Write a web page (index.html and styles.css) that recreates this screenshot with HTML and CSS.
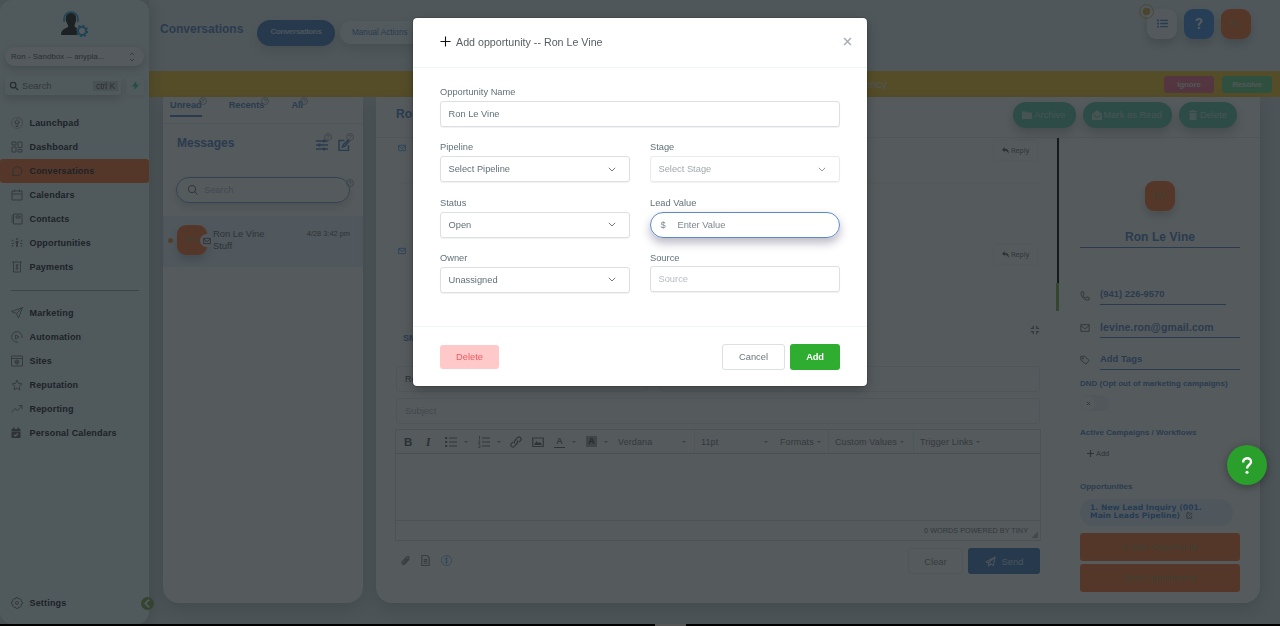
FILE: index.html
```
<!DOCTYPE html>
<html lang="en">
<head>
  <meta charset="UTF-8" />
  <title>Conversations</title>
  <link rel="stylesheet" href="styles.css">
</head>
<body>
  <div class="app">
    <aside class="sidebar">
      <svg class="logo" viewBox="0 0 28 27">
        <path d="M1 25c0-5 3-6 7-8 1-1-1-3-2-6-1-5 1-8 5-8s6 3 5 8c-1 3-2 5-1 6l2 1v7z" fill="#1d1d1d"/>
        <path d="M4 11V9a7 7 0 0 1 14 0v2M4 9v3M18 9v3" fill="none" stroke="#2a9fe0" stroke-width="1.6"/>
        <circle cx="22" cy="21" r="4" fill="#fff" stroke="#2a9fe0" stroke-width="2"/>
        <circle cx="22" cy="21" r="5.4" fill="none" stroke="#2a9fe0" stroke-width="1.6" stroke-dasharray="2.1 2.1"/>
      </svg>
      <div class="account">Ron - Sandbox -- anypla...
        <svg class="updown" viewBox="0 0 8 12"><path d="M2 4l2-2 2 2M2 8l2 2 2-2"/></svg>
      </div>
      <div class="side-search">
        <div class="search-box">
          <svg class="icon dark" viewBox="0 0 24 24"><circle cx="10" cy="10" r="6.5"/><path d="M15 15l7 7"/></svg>
          <span>Search</span><kbd>ctrl K</kbd>
        </div>
        <div class="bolt"><svg viewBox="0 0 10 10"><path d="M6 0L1 6h3.2L3.6 10 9 4H5.6z"/></svg></div>
      </div>
      <nav class="nav">
        <a><svg class="icon" viewBox="0 0 24 24"><circle class="ring" cx="12" cy="12" r="11"/><path class="arc" d="M13 1a11 11 0 0 1 9 6"/><path d="M12 5l5 6h-2.500v3h-5v-3H7zM10 17v2h4v-2"/></svg>Launchpad</a>
        <a><svg class="icon" viewBox="0 0 24 24"><path d="M2 2h8v6H2zM14 2h8v11h-8zM2 12h8v10H2zM14 17h8v5h-8z"/></svg>Dashboard</a>
        <a class="active"><svg class="icon" viewBox="0 0 24 24"><path d="M3 21l1.500-5A9 9 0 1 1 9 20.500z"/></svg>Conversations</a>
        <a><svg class="icon" viewBox="0 0 24 24"><path d="M2 4h20v18H2zM2 10h20M7 1v5M17 1v5"/></svg>Calendars</a>
        <a><svg class="icon" viewBox="0 0 24 24"><path d="M5 2h17v20H5zM10 6h8v4h-8zM1 6h5M1 10h5M1 14h5M1 18h5"/></svg>Contacts</a>
        <a><svg class="icon" viewBox="0 0 24 24"><path d="M12 8v12M9 10h6" stroke-width="3.500"/><circle cx="12" cy="4" r="1.500"/><circle cx="3" cy="7" r="1"/><circle cx="21" cy="7" r="1"/><circle cx="3" cy="18" r="1"/><circle cx="21" cy="18" r="1"/><path d="M1 13h5M18 13h5"/></svg>Opportunities</a>
        <a><svg class="icon" viewBox="0 0 24 24"><path d="M2 2h20M5 2v20h14V2M15 8c-5-2-6 3-3 4s3 5-3 3.500M12 6v12"/></svg>Payments</a>
      </nav>
      <hr>
      <nav class="nav">
        <a><svg class="icon" viewBox="0 0 24 24"><path d="M1 9L23 1l-8 21-4-9zM11 13L23 1"/></svg>Marketing</a>
        <a><svg class="icon" viewBox="0 0 24 24"><path d="M22 14A10.500 10.500 0 1 0 14 22M9 8l7 4-7 4z"/></svg>Automation</a>
        <a><svg class="icon" viewBox="0 0 24 24"><path d="M1 2h22v20H1zM1 7h22"/><circle cx="12" cy="14" r="4"/><path d="M8 14h8M12 10v8"/></svg>Sites</a>
        <a><svg class="icon" viewBox="0 0 24 24"><path d="M12 2l3 7 7 .6-5.500 5L18 22l-6-4-6 4 1.500-7.400L2 9.600 9 9z"/></svg>Reputation</a>
        <a><svg class="icon" viewBox="0 0 24 24"><path d="M1 19l7-8 5 4 9-10M15 5h7v7"/></svg>Reporting</a>
        <a><svg class="icon filled" viewBox="0 0 24 24"><path d="M1 4h18v4H1zM1 9h18v13H1zM4 1h3v4H4zM13 1h3v4h-3z"/><path class="check" d="M6 15l3 3 5-5"/></svg>Personal Calendars</a>
      </nav>
      <nav class="nav settings">
        <a><svg class="icon" viewBox="0 0 24 24"><circle cx="12" cy="12" r="3"/><path d="M10 1h4l1 3 3-1 3 3-1 3 3 1v4l-3 1 1 3-3 3-3-1-1 3h-4l-1-3-3 1-3-3 1-3-3-1v-4l3-1-1-3 3-3 3 1z"/></svg>Settings</a>
      </nav>
      <div class="collapse"><svg viewBox="0 0 12 12"><path d="M7.500 2.500L4 6l3.500 3.500"/></svg></div>
    </aside>

    <main class="main">
      <header class="topbar">
        <h1>Conversations</h1>
        <div class="top-tab on">Conversations</div>
        <div class="top-tab">Manual Actions</div>
        <div class="top-right">
          <div class="tile list"><i class="badge"></i>
            <svg viewBox="0 0 12 10"><path d="M0 1.500h2M0 5h2M0 8.500h2" stroke-width="2"/><path d="M3.500 1.500H12M3.500 5H12M3.500 8.500H12"/></svg>
          </div>
          <div class="tile help">?</div>
          <div class="tile me">RL</div>
        </div>
      </header>
      <div class="notice"><span class="notice-text">agency</span><b class="ignore">Ignore</b><b class="resolve">Resolve</b></div>

      <div class="content">
        <section class="inbox">
          <div class="tabs"><span class="on">Unread<i class="q">?</i></span><span>Recents<i class="q">?</i></span><span>All<i class="q">?</i></span></div>
          <div class="inbox-head">
            <h2>Messages</h2>
            <span class="tool"><svg viewBox="0 0 12 12"><path d="M0 2h12M0 6h12M0 10h12"/><path d="M8 .5v3M3.500 4.500v3M8 8.500v3" stroke-width="2"/></svg><i class="q">?</i></span>
            <span class="tool"><svg viewBox="0 0 12 12"><path d="M6.500 1.500H1v10h9.500V6M4.500 8l1-2.500L10.500.8l1 1L7 7z"/></svg><i class="q">?</i></span>
          </div>
          <div class="inbox-search"><svg class="icon dark" viewBox="0 0 24 24"><circle cx="11" cy="11" r="8"/><path d="M17 17l6 6"/></svg>Search<i class="q">?</i></div>
          <div class="thread">
            <i class="dot"></i>
            <div class="avatar">RV<span class="mail-chip"><svg class="icon mail dark" viewBox="0 0 24 24"><path d="M2 4h20v16H2zM2 6l10 8L22 6"/></svg></span></div>
            <div class="thread-text">Ron Le Vine<br>Stuff</div>
            <time>4/28 3:42 pm</time>
          </div>
        </section>

        <section class="conversation">
          <div class="conv-head">
            <h2>Ron</h2>
            <div class="action"><svg viewBox="0 0 10 10"><path d="M0 1.500h4l1 1h5v6.500H0z"/></svg>Archive</div>
            <div class="action"><svg viewBox="0 0 10 10"><path d="M0 4l5-4 5 4v6H0z"/><path class="cut" d="M1.500 5l3.500 2.500L8.500 5"/></svg>Mark as Read</div>
            <div class="action"><svg viewBox="0 0 10 10"><path d="M1 1h2.500V0h3v1H9v1.200H1zM1.600 3h6.800v7H1.600z"/></svg>Delete</div>
          </div>
          <div class="conv-body">
            <div class="mail-col">
              <div class="mail-row"><svg class="icon mail blue" viewBox="0 0 24 24"><path d="M2 4h20v16H2zM2 6l10 8L22 6"/></svg>
                <span class="reply"><svg viewBox="0 0 8 8"><path d="M0 3l3-3v2c4 0 5 2 4.500 6C6.500 5 5 4.200 3 4.200V6z"/></svg>Reply</span></div>
              <div class="mail-row second"><svg class="icon mail blue" viewBox="0 0 24 24"><path d="M2 4h20v16H2zM2 6l10 8L22 6"/></svg>
                <span class="reply"><svg viewBox="0 0 8 8"><path d="M0 3l3-3v2c4 0 5 2 4.500 6C6.500 5 5 4.200 3 4.200V6z"/></svg>Reply</span></div>
              <div class="compose-tabs"><b>SMS</b>
                <svg class="shrink" viewBox="0 0 12 12"><path d="M1 4h3V1M8 1v3h3M11 8H8v3M4 11V8H1"/></svg></div>
              <div class="pair"><div class="field">Ron</div><div class="field"></div></div>
              <div class="field subject">Subject</div>
              <div class="editor">
                <div class="toolbar">
                  <b class="t-bold">B</b><b class="t-italic">I</b>
                  <svg class="t-list" viewBox="0 0 12 12"><path d="M4 2h8M4 6h8M4 10h8"/><path d="M0 2h2.200M0 6h2.200M0 10h2.200" stroke-width="2.200"/></svg><i class="caret"></i>
                  <svg class="t-num" viewBox="0 0 12 12"><path d="M4 2h8M4 6h8M4 10h8"/><path d="M1.500 0v3.500M.5 5h1.500L.5 7.500H2M.5 9H2v2.500H.5" stroke-width=".8"/></svg><i class="caret"></i>
                  <svg class="t-link" viewBox="0 0 12 12"><path d="M5 7.500a2.200 2.200 0 0 1 0-3l2.500-2.800a2 2 0 0 1 3 3L9 6.200M7 4.500a2.200 2.200 0 0 1 0 3l-2.500 2.800a2 2 0 0 1-3-3L3 5.800"/></svg>
                  <svg class="t-img" viewBox="0 0 12 12"><path d="M.7 2h10.600v8.500H.7z" /><path class="solid" d="M2 9l2.500-4L6 7l2-1 2 3z"/></svg>
                  <span class="t-color">A</span><i class="caret"></i>
                  <span class="t-back">A</span><i class="caret"></i>
                  <span class="t-font">Verdana<i class="caret"></i></span>
                  <span class="t-size">11pt<i class="caret"></i></span>
                  <span class="t-format">Formats<i class="caret"></i></span>
                  <span class="t-custom">Custom Values<i class="caret"></i></span>
                  <span class="t-trigger">Trigger Links<i class="caret"></i></span>
                </div>
                <div class="editor-area"></div>
                <div class="editor-foot">0 WORDS POWERED BY TINY<i class="grip"></i></div>
              </div>
              <div class="send-row">
                <svg class="icon" viewBox="0 0 24 24"><path d="M20 9l-9 10c-4 4-9-1-6-5L15 4c3-3 7 1 4 4l-9 10c-2 1-3-1-2-2l8-9" stroke-width="2.500"/></svg>
                <svg class="icon" viewBox="0 0 24 24"><path d="M4 1h11l5 5v17H4zM8 10h8M8 14h8M8 18h8" stroke-width="2.500"/></svg>
                <svg class="icon money" viewBox="0 0 24 24"><circle cx="12" cy="12" r="11"/><path d="M16 8c-6-3-9 2-4 4s2 6-4 3.500M12 4v16"/></svg>
                <div class="clear">Clear</div>
                <div class="send"><svg class="icon" viewBox="0 0 24 24"><path d="M2 13L22 2l-4 19-6-4-4 5v-7zM8 15L22 2" stroke-width="2.500"/></svg>Send</div>
              </div>
            </div>

            <div class="scroll"><i></i></div>

            <div class="contact">
              <div class="avatar">RV</div>
              <h2>Ron Le Vine</h2>
              <div class="info phone"><svg class="icon dark" viewBox="0 0 24 24"><path d="M3 2h5l2 6-3 2c1 4 3 6 7 7l2-3 6 2v5c-9 4-22-8-19-19z"/></svg><b>(941) 226-9570</b></div>
              <div class="info email"><svg class="icon dark" viewBox="0 0 24 24"><path d="M2 4h20v16H2zM2 6l10 8L22 6"/></svg><b>levine.ron@gmail.com</b></div>
              <div class="info tags"><svg class="icon dark" viewBox="0 0 24 24"><path d="M2 3h9l11 10-8 9L2 12z"/><circle cx="7" cy="8" r="1.500"/></svg><b>Add Tags</b></div>
              <h3>DND (Opt out of marketing campaigns)</h3>
              <div class="switch"><i><svg viewBox="0 0 6 6"><path d="M1 1l4 4M5 1L1 5"/></svg></i></div>
              <h3>Active Campaigns / Workflows</h3>
              <div class="add-flow"><svg viewBox="0 0 8 8"><path d="M4 0v8M0 4h8"/></svg>Add</div>
              <h3>Opportunities</h3>
              <div class="opp">1. New Lead Inquiry (001. Main Leads Pipeline) <svg viewBox="0 0 8 8"><path d="M5 1H1v6h5.500V4M3 5l4-4"/></svg></div>
              <div class="wide-btn">Create Opportunity</div>
              <div class="wide-btn">Book Appointment</div>
            </div>
          </div>
        </section>
      </div>
    </main>
  </div>
  <div class="taskbar"><i></i></div>

  <div class="backdrop"></div>

  <div class="modal">
    <div class="modal-head">
      <svg class="plus" viewBox="0 0 12 12"><path d="M6 .5v11M.5 6h11"/></svg>
      <span>Add opportunity -- Ron Le Vine</span>
      <svg class="close" viewBox="0 0 10 10"><path d="M1.200 1.200l7.600 7.600M8.800 1.200L1.200 8.800"/></svg>
    </div>
    <div class="modal-body">
      <div class="group full"><label>Opportunity Name</label><div class="input">Ron Le Vine</div></div>
      <div class="group"><label>Pipeline</label><div class="input">Select Pipeline<svg class="chev" viewBox="0 0 8 5"><path d="M.8.8L4 4 7.200.8"/></svg></div></div>
      <div class="group"><label>Stage</label><div class="input disabled">Select Stage<svg class="chev" viewBox="0 0 8 5"><path d="M.8.8L4 4 7.200.8"/></svg></div></div>
      <div class="group"><label>Status</label><div class="input">Open<svg class="chev" viewBox="0 0 8 5"><path d="M.8.8L4 4 7.200.8"/></svg></div></div>
      <div class="group"><label>Lead Value</label><div class="input money-input"><span>$</span>Enter Value</div></div>
      <div class="group"><label>Owner</label><div class="input">Unassigned<svg class="chev" viewBox="0 0 8 5"><path d="M.8.8L4 4 7.200.8"/></svg></div></div>
      <div class="group source"><label>Source</label><div class="input empty">Source</div></div>
    </div>
    <div class="modal-foot">
      <button class="btn-delete">Delete</button>
      <button class="btn-cancel">Cancel</button>
      <button class="btn-add">Add</button>
    </div>
  </div>

  <div class="fab"><svg viewBox="0 0 14 20"><path d="M2.500 6.500C2 0 12 0 11.700 6c0 3-4.700 3.500-4.700 7.500"/><circle cx="7" cy="17.800" r="1.800"/></svg></div>
</body>
</html>
```
FILE: styles.css
```
:root {
  --side: #ecfafb;
  --page: #dce6ea;
  --panel: #ffffff;
  --blue: #5485c6;
  --blue-btn: #477dbf;
  --orange: #ff7433;
  --line: #e8edf0;
  --ink: #202028;
}

* {
  box-sizing: border-box;
}

body {
  margin: 0;
  height: 626px;
  overflow: hidden;
  font-family: "Liberation Sans", Arial, sans-serif;
  font-size: 9px;
  color: #555;
  background: #000;
}

h1, h2, h3 {
  margin: 0;
  color: var(--blue);
}

h1, h2 {
  font-size: 12px;
}

svg {
  fill: none;
  stroke: currentColor;
  flex: none;
}

i {
  font-style: normal;
}

.app {
  display: flex;
  height: 624px;
  background: var(--page);
}

.icon {
  width: 12px;
  height: 12px;
  stroke-width: 1.800;
  stroke-linejoin: round;
  color: #777;
}
.icon.dark { color: #4a4a4a; }
.icon.mail { width: 8px; height: 8px; stroke-width: 2.500; }
.icon.blue { color: #4a9af0; }

/* sidebar */
.sidebar {
  position: relative;
  width: 149px;
  display: flex;
  flex-direction: column;
  padding: 10px 0 9px;
  background: var(--side);
  border-radius: 12px;
  box-shadow: 4px 0 14px rgba(0,0,0,0.16);
}

.logo {
  width: 28px;
  height: 27px;
  align-self: center;
  margin-right: 1px;
  stroke: none;
}

.account {
  display: flex;
  align-items: center;
  justify-content: space-between;
  height: 19px;
  margin: 10px 5px;
  padding: 0 8px 0 6px;
  font-size: 8px;
  border-radius: 10px;
  background: #fbffff;
  box-shadow: 0 3px 8px rgba(0,0,0,0.22);
}
.updown { width: 8px; height: 12px; color: #888; }

.side-search {
  display: flex;
  gap: 5px;
  margin: 0 5px 16px;
}
.search-box {
  flex: 1;
  display: flex;
  align-items: center;
  height: 19px;
  padding: 0 3px 0 4px;
  gap: 3px;
  border-radius: 3px;
  box-shadow: 0 4px 8px rgba(0,0,0,0.2);
}
.search-box .icon { width: 10px; height: 10px; stroke-width: 3; }
.search-box span { color: #777; font-size: 9.300px; }
.search-box kbd {
  margin-left: auto;
  padding: 0 3px;
  font: 8.300px "Liberation Sans", sans-serif;
  background: #d2dbe0;
}
.bolt {
  width: 18px;
  display: grid;
  place-items: center;
  border-radius: 3px;
  box-shadow: 0 1px 4px rgba(0,0,0,0.1);
}
.bolt svg { width: 9px; height: 9px; fill: #3ccf91; stroke: none; }

.nav a {
  display: flex;
  align-items: center;
  gap: 6.500px;
  height: 24px;
  padding-left: 11px;
  font-weight: bold;
  letter-spacing: 0.180px;
  color: var(--ink);
  border-radius: 3px;
}
.nav a.active { background: var(--orange); }
.nav a.active .icon { color: #555; }
.nav .ring { stroke: #bbb; }
.nav .arc { stroke: #ff9a5c; }
.nav .filled path { fill: #666; stroke: none; }
.nav .filled .check { fill: none; stroke: #fff; stroke-width: 2.500; }
.nav.settings { margin-top: auto; }

.sidebar hr {
  width: 128px;
  margin: 11px 0 10px 11px;
  border: 0;
  border-top: 1px solid #9aa8b0;
}

.collapse {
  position: absolute;
  right: -5px;
  bottom: 14px;
  z-index: 2;
  width: 13px;
  height: 13px;
  border-radius: 50%;
  background: #7ba64b;
  color: #fff;
}
.collapse svg { display: block; stroke-width: 1.600; }

/* top */
.main {
  flex: 1;
  min-width: 0;
  display: flex;
  flex-direction: column;
}
.topbar {
  display: flex;
  align-items: flex-start;
  height: 71px;
  padding: 0 29px 0 11px;
  background: #e6f2f4;
}
.topbar h1 { width: 97px; margin-top: 22px; }
.top-tab {
  height: 23px;
  margin-top: 21px;
  padding: 0 12px;
  line-height: 23px;
  font-size: 8.200px;
  color: var(--blue);
  border-radius: 13px;
  background: #f5fdff;
  box-shadow: 0 5px 12px rgba(0,0,0,0.15);
}
.top-tab.on {
  width: 78px;
  height: 26px;
  margin: 20px 5px 0 0;
  padding: 0;
  text-align: center;
  line-height: 24px;
  font-size: 8px;
  letter-spacing: -0.350px;
  font-weight: bold;
  color: #d8e8f8;
  background: var(--blue-btn);
}
.top-right { display: flex; gap: 7px; margin: 9px 0 0 auto; }
.tile {
  position: relative;
  width: 30px;
  height: 30px;
  display: grid;
  place-items: center;
  border-radius: 9px;
  box-shadow: 0 5px 10px rgba(0,0,0,0.2);
}
.tile.list { background: #f6fafc; color: var(--blue); }
.tile.list svg { width: 11px; height: 9px; margin-bottom: 2px; stroke-width: 1.400; }
.tile.help { background: #4492e8; color: #fff; font: bold 15px Roboto, sans-serif; }
.tile.me { background: var(--orange); color: #a0a060; }
.badge {
  position: absolute;
  left: -8px;
  top: -5px;
  width: 15px;
  height: 15px;
  border: 1px solid #d8b45a;
  border-radius: 50%;
  background: radial-gradient(#e0a844 0 3.500px, transparent 4px);
}

.notice {
  display: flex;
  align-items: center;
  height: 26px;
  padding-right: 8px;
  gap: 8px;
  background: #ffcb2d;
  color: #fff;
}
.notice-text { width: 738px; text-align: right; font-size: 10.500px; color: #e5e5e5; }
.notice b {
  width: 50px;
  line-height: 17px;
  text-align: center;
  font-size: 8px;
  letter-spacing: -0.150px;
  color: #eee;
  border-radius: 3px;
}
.ignore { margin-left: auto; background: #f66f88; }
.resolve { background: #6bd887; }

/* columns */
.content {
  flex: 1;
  display: flex;
  gap: 13px;
  padding: 0 20px 21px 14px;
}
.inbox, .conversation {
  background: var(--panel);
  border-radius: 0 0 16px 16px;
  box-shadow: 0 6px 18px rgba(0,0,0,0.18);
}
.inbox { width: 200px; }
.conversation { flex: 1; }

.q {
  display: grid;
  place-items: center;
  width: 8px;
  height: 8px;
  font: 6px "Liberation Sans", sans-serif;
  color: #8a949c;
  border: 1px solid #a5afb6;
  border-radius: 50%;
}

.tabs {
  display: flex;
  gap: 27px;
  height: 27px;
  padding: 0 7px;
  font-size: 9.200px;
  font-weight: bold;
  color: var(--blue);
  border-bottom: 1px solid var(--line);
}
.tabs span { position: relative; height: 20px; line-height: 16px; }
.tabs .on { border-bottom: 2px solid var(--blue); }
.tabs .q { position: absolute; top: 0; right: -5px; }

.inbox-head {
  display: flex;
  align-items: center;
  height: 39px;
  padding: 0 13px 0 14px;
  gap: 10px;
}
.inbox-head h2 { margin-right: auto; margin-bottom: 1px; }
.tool { position: relative; height: 12px; color: var(--blue); margin-top: 3px; }
.tool svg { width: 12px; height: 12px; stroke-width: 1.500; }
.tool .q { position: absolute; top: -6px; right: -4px; }

.inbox-search {
  position: relative;
  display: flex;
  align-items: center;
  gap: 6px;
  width: 174px;
  height: 26px;
  margin: 14px 0 13px 13px;
  padding: 0 0 1px 10px;
  font-size: 9.300px;
  color: #b4bcc4;
  border: 1px solid #7ba3d2;
  border-radius: 13px;
  box-shadow: 0 4px 8px rgba(0,0,0,0.16);
}
.inbox-search .icon { width: 11px; height: 11px; }
.inbox-search .q { position: absolute; top: 1px; right: -5px; }

.thread {
  display: flex;
  height: 51px;
  padding: 9px 13px 0 5px;
  background: #e9f4ff;
  color: #666;
}
.dot { width: 5px; height: 5px; margin: 13px 4px 0 0; border-radius: 50%; background: #f59330; }
.avatar {
  position: relative;
  display: grid;
  place-items: center;
  width: 30px;
  height: 30px;
  border-radius: 9px;
  background: var(--orange);
  color: #a09450;
  box-shadow: 0 5px 9px rgba(0,0,0,0.2);
}
.mail-chip {
  position: absolute;
  right: -6px;
  top: 9px;
  width: 13px;
  height: 13px;
  display: grid;
  place-items: center;
  border-radius: 50%;
  background: #eef4fa;
}
.thread-text { margin: 3px 0 0 6px; font-size: 9.400px; line-height: 12px; }
.thread time { margin: 4px 0 0 auto; font-size: 7.400px; }

/* conversation */
.conv-head {
  display: flex;
  height: 41px;
  padding: 5px 23px 0 20px;
  gap: 7px;
  border-bottom: 1px solid var(--line);
}
.conv-head h2 { margin: 5px auto 0 0; }
.action {
  display: flex;
  align-items: center;
  gap: 2px;
  height: 26px;
  padding: 0 10px 1px 9px;
  font-size: 9.400px;
  color: #c5e5dc;
  background: #5fc4a6;
  border-radius: 13px;
  box-shadow: 0 5px 12px rgba(0,0,0,0.25);
}
.action svg { width: 10px; height: 10px; fill: #c5e5dc; stroke: none; }
.action .cut { fill: none; stroke: #68b8a0; }

.conv-body { display: flex; }
.mail-col { width: 664px; padding-left: 20px; }
.mail-row {
  display: flex;
  justify-content: space-between;
  width: 644px;
  height: 46px;
  padding: 3px 3px 0 2px;
  border-bottom: 1px solid #f5f7f8;
}
.mail-row .icon { margin-top: 3px; }
.mail-row.second { margin-top: 57px; border: 0; }
.reply {
  display: flex;
  align-items: center;
  gap: 2px;
  width: 43px;
  height: 19px;
  padding-left: 8px;
  font: 7.500px Roboto, sans-serif;
  color: #777;
  border-radius: 3px;
  box-shadow: 0 0 4px rgba(0,0,0,0.08);
}
.reply svg { width: 7px; height: 7px; fill: #666; stroke: none; }
.second .reply { margin-top: 1px; }

.compose-tabs {
  display: flex;
  justify-content: space-between;
  height: 79px;
  width: 644px;
  padding: 46px 0 0 7px;
  color: var(--blue);
}
.shrink { width: 10px; height: 10px; margin-top: -8px; stroke-width: 1.500; color: #778; }
.field {
  width: 644px;
  height: 26px;
  padding-left: 8px;
  line-height: 24px;
  border: 1px solid var(--line);
  border-radius: 3px;
}
.pair { display: flex; gap: 13px; width: 644px; }
.pair .field:first-child { flex: none; width: 251px; }
.subject { margin: 6px 0 5px; font-size: 9.400px; color: #b5bcc2; }

.editor {
  width: 646px;
  height: 112px;
  margin-left: -1px;
  display: flex;
  flex-direction: column;
  border: 1px solid #dadfe2;
}
.toolbar {
  display: flex;
  align-items: center;
  height: 24px;
  padding-left: 8px;
  font-size: 9px;
  color: #7a7a7a;
  border-bottom: 1px solid #ced3d6;
  letter-spacing: 0.120px;
}
.toolbar svg { width: 12px; height: 12px; stroke-width: 1.200; color: #707070; }
.toolbar b { color: #5a5a5a; font-size: 11.500px; width: 8px; }
.toolbar .t-italic { margin: 0 11px 0 14px; font-family: "Liberation Serif", serif; font-style: italic; width: 8px; }
.caret {
  border: 2.500px solid transparent;
  border-top-color: #999;
  border-bottom: 0;
  margin-left: 7px;
}
.t-num { margin-left: 10px; }
.t-link { margin-left: 9px; }
.t-img { margin-left: 10px; }
.toolbar .solid { fill: #666; stroke: none; }
.t-color, .t-back { width: 11px; text-align: center; font-weight: bold; line-height: 11px; }
.t-color { margin-left: 10px; border-bottom: 1px solid #666; }
.t-back { margin-left: 10px; background: #aaa; color: #444; }
.t-font, .t-size, .t-format, .t-custom, .t-trigger {
  display: flex;
  align-items: center;
  height: 23px;
}
.t-font { width: 77px; margin-left: 10px; padding-right: 8px; border-right: 1px solid var(--line); }
.t-size { width: 80px; padding: 0 7px 0 6px; }
.t-font .caret, .t-size .caret { margin-left: auto; }
.t-format .caret, .t-custom .caret, .t-trigger .caret { margin-left: 3px; }
.t-format { width: 54px; padding-left: 5px; border-right: 1px solid var(--line); }
.t-custom { width: 85px; padding-left: 6px; border-right: 1px solid var(--line); }
.t-trigger { padding-left: 6px; }
.editor-area { flex: 1; }
.editor-foot {
  display: flex;
  align-items: center;
  justify-content: flex-end;
  height: 20px;
  padding-right: 2px;
  font-size: 7.300px;
  gap: 3px;
  color: #777;
  border-top: 1px solid #dadfe2;
}
.grip {
  width: 7px;
  height: 7px;
  align-self: flex-end;
  margin-bottom: 2px;
  background: linear-gradient(135deg, transparent 50%, #bbb 50%);
}
.send-row {
  display: flex;
  align-items: center;
  width: 644px;
  height: 26px;
  margin-top: 7px;
  padding-left: 4px;
  gap: 8px;
}
.send-row > .icon { width: 11px; height: 11px; margin-right: 1px; margin-bottom: 2px; color: #8a8a8a; }
.send-row > .money { color: #62aaf5; margin-left: 1px; }
.clear, .send {
  display: flex;
  align-items: center;
  justify-content: center;
  height: 26px;
  font-size: 9.400px;
  border-radius: 3px;
}
.clear { width: 55px; margin-left: auto; margin-right: -3px; color: #888; border: 1px solid var(--line); }
.send { width: 72px; gap: 6px; color: #cfe0f2; background: var(--blue-btn); }
.send .icon { color: #cfe0f2; width: 11px; height: 11px; }

.scroll {
  width: 40px;
  height: 173px;
  padding-left: 16px;
}
.scroll::before {
  content: "";
  display: block;
  width: 2px;
  height: 145px;
  margin-left: 1px;
  background: #000;
}
.scroll i { display: block; width: 3px; height: 28px; background: #7bb04b; }

.contact { width: 160px; padding-top: 43px; color: var(--blue); }
.contact .avatar { margin: 0 auto; }
.contact h2 {
  height: 37px;
  padding-top: 19px;
  text-align: center;
  letter-spacing: 0.100px;
  border-bottom: 1px solid var(--blue);
  margin-bottom: 36px;
}
.contact h3 { font-size: 8px; line-height: 10px; }
.info { display: flex; gap: 10px; height: 33px; padding-top: 5px; }
.info .icon { width: 10px; height: 10px; margin-top: 1px; }
.info b {
  flex: 1;
  height: 16px;
  font-size: 9.400px;
  line-height: 10px;
  letter-spacing: 0.030px;
  border-bottom: 1px solid var(--blue);
}
.info.phone b { flex: none; width: 126px; }
.info.phone .icon { margin-top: 2px; }
.info.email b { font-size: 10.500px; letter-spacing: 0.100px; }
.info.tags { height: 29px; padding-top: 4px; }
.switch {
  width: 29px;
  height: 16px;
  margin: 6px 0 17px;
  padding: 1px;
  border-radius: 8px;
  background: #f0f3f5;
}
.switch i {
  display: grid;
  place-items: center;
  width: 14px;
  height: 14px;
  color: #666;
  border-radius: 50%;
  background: #fff;
}
.switch svg { width: 5px; height: 5px; }
.add-flow {
  display: flex;
  align-items: center;
  gap: 2px;
  margin: 10px 0 24px 7px;
  height: 10px;
  font: 7.500px Roboto, sans-serif;
  color: #666;
}
.add-flow svg { width: 7px; height: 7px; stroke-width: 1.400; }
.opp {
  width: 153px;
  height: 27px;
  margin: 7px 0 7px;
  padding: 5px 10px;
  font: bold 7.700px/8px "DejaVu Sans", Verdana, sans-serif;
  color: #3f86d8;
  border-radius: 13px;
  background: #e8f4ff;
}
.opp svg { width: 7px; height: 7px; margin-left: 3px; color: #666; vertical-align: -1px; }
.wide-btn {
  height: 28px;
  margin-bottom: 3px;
  text-align: center;
  line-height: 28px;
  color: #a09450;
  border-radius: 3px;
  background: var(--orange);
}

.taskbar { height: 2px; background: #000; }
.taskbar i { display: block; width: 31px; height: 2px; margin-left: 655px; background: #555; }

.backdrop {
  position: fixed;
  inset: 0 0 2px 0;
  z-index: 5;
  background: rgba(28,35,39,0.75);
}

/* modal */
.modal {
  position: fixed;
  left: 413px;
  top: 18px;
  z-index: 6;
  width: 454px;
  height: 368px;
  display: flex;
  flex-direction: column;
  font-size: 9.300px;
  color: #607179;
  background: #fff;
  border-radius: 4px;
  box-shadow: 0 0 1px #000, 0 4px 12px rgba(0,0,0,0.25);
}
.modal-head {
  display: flex;
  align-items: center;
  height: 50px;
  padding: 0 15px 2px 27px;
  gap: 5px;
  font-size: 10.700px;
  color: #555d62;
  border-bottom: 1px solid #eff4f8;
}
.plus { width: 11px; height: 11px; color: #111; stroke-width: 1.200; }
.close { width: 9px; height: 9px; margin: -1px 0 0 auto; color: #a5b0b5; stroke-width: 1.700; }
.modal-body {
  display: grid;
  grid-template-columns: 190px 190px;
  column-gap: 20px;
  grid-auto-rows: 55.300px;
  align-content: start;
  flex: 1;
  padding: 18px 27px 0;
}
.group.full { grid-column: 1 / 3; }
.group label { display: block; line-height: 12px; margin-bottom: 3px; }
.group.source label { margin-bottom: 2px; }
.input {
  display: flex;
  align-items: center;
  height: 26px;
  padding: 0 13px 0 7.500px;
  border: 1px solid #dcdfe3;
  border-radius: 3px;
  box-shadow: 0 1px 1px rgba(0,0,0,0.06);
}
.chev { width: 8px; height: 5px; margin-left: auto; color: #777; }
.disabled { color: #a0a8ac; border-color: #e8eaec; }
.disabled .chev { color: #999; }
.empty { color: #b5bdc2; }
.money-input {
  padding-left: 9.500px;
  color: #7c878d;
  border-color: #5b88c8;
  border-radius: 13px;
  box-shadow: 0 5px 10px rgba(30,20,60,0.3);
}
.money-input span { width: 17px; }
.modal-foot {
  display: flex;
  align-items: center;
  height: 60px;
  padding: 0 27px;
  gap: 5px;
  border-top: 1px solid #eff4f8;
}
.modal-foot button {
  height: 26px;
  padding: 0;
  font: inherit;
  border: 0;
  border-radius: 3px;
}
.modal-foot .btn-delete { width: 59px; height: 24px; margin-right: auto; color: #ee5a60; background: #ffc8c9; }
.modal-foot .btn-cancel { width: 63px; color: #6b757a; background: #fff; border: 1px solid #dcdfe3; }
.modal-foot .btn-add { width: 50px; font-weight: bold; letter-spacing: -0.200px; color: #fff; background: #2fad30; }

.fab {
  position: fixed;
  left: 1227px;
  top: 445px;
  z-index: 7;
  width: 40px;
  height: 40px;
  display: grid;
  place-items: center;
  border-radius: 50%;
  background: #2a9f2b;
  color: #fff;
  box-shadow: 0 2px 8px rgba(0,0,0,0.35);
}
.fab svg { width: 12px; height: 19px; stroke-width: 2.800; }
.fab circle { fill: #fff; stroke: none; }
```
